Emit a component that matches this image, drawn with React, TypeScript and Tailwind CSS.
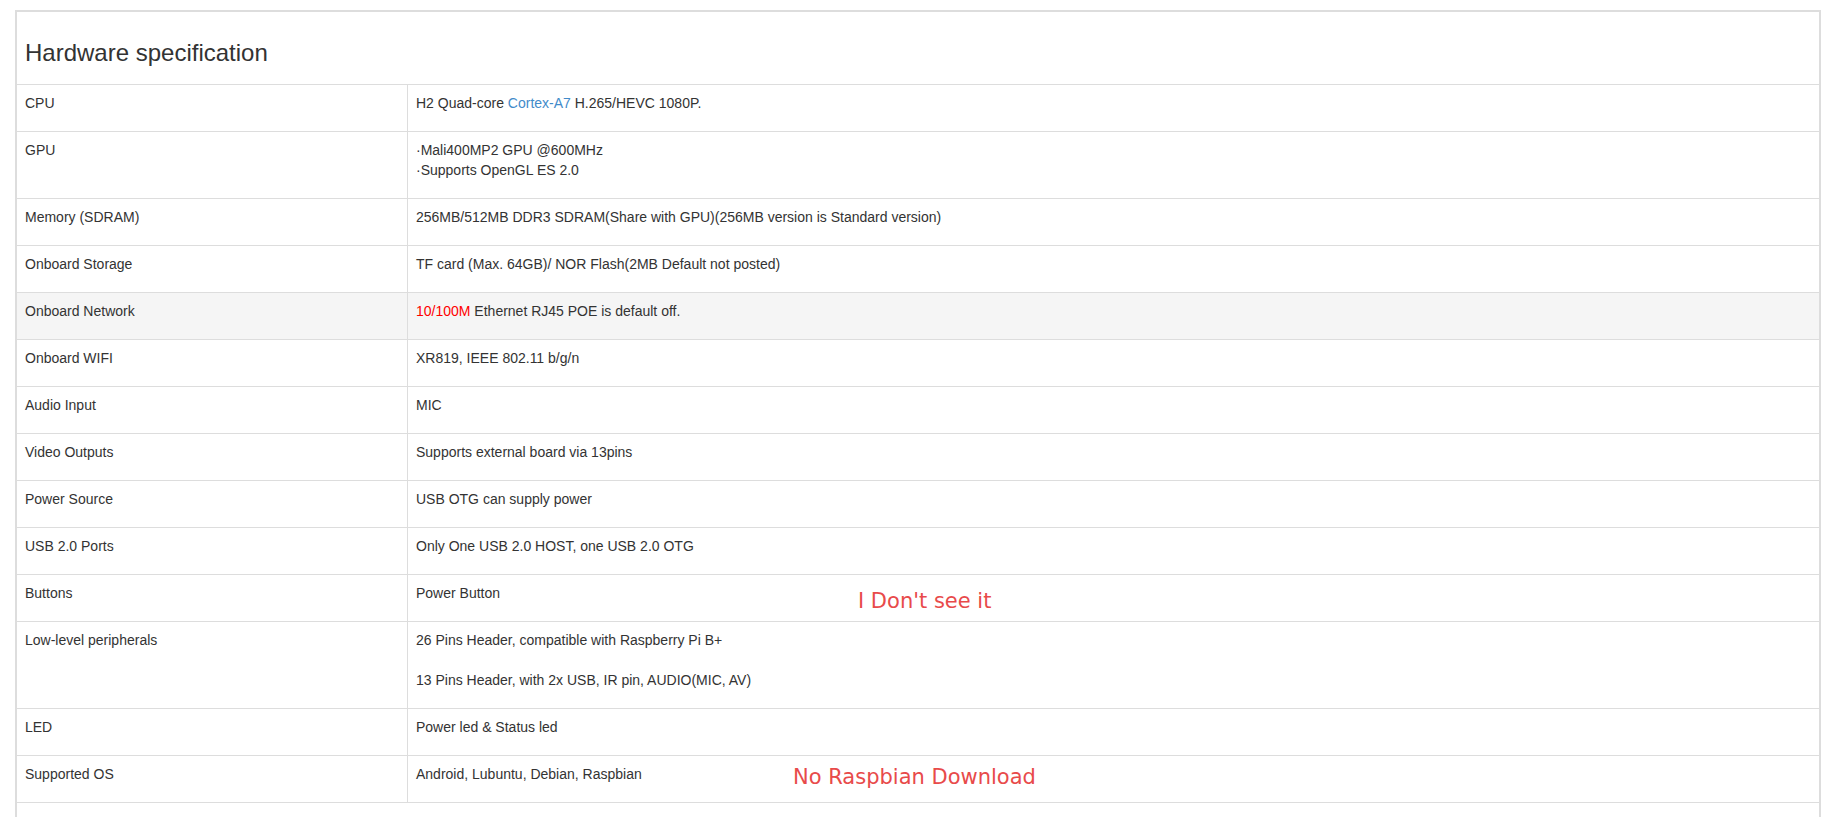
import React from 'react';

type Spec = {
  label: string;
  value: React.ReactNode;
  highlight?: boolean;
};

const specs: Spec[] = [
  {
    label: 'CPU',
    value: (
      <p className="mb-[10px]">
        H2 Quad-core <span className="text-[#428bca]">Cortex-A7</span> H.265/HEVC 1080P.
      </p>
    ),
  },
  {
    label: 'GPU',
    value: (
      <p className="mb-[10px]">
        ·Mali400MP2 GPU @600MHz
        <br />
        ·Supports OpenGL ES 2.0
      </p>
    ),
  },
  {
    label: 'Memory (SDRAM)',
    value: <p className="mb-[10px]">256MB/512MB DDR3 SDRAM(Share with GPU)(256MB version is Standard version)</p>,
  },
  {
    label: 'Onboard Storage',
    value: <p className="mb-[10px]">TF card (Max. 64GB)/ NOR Flash(2MB Default not posted)</p>,
  },
  {
    label: 'Onboard Network',
    highlight: true,
    value: (
      <p className="mb-[10px]">
        <span className="text-[#ff0000]">10/100M</span> Ethernet RJ45 POE is default off.
      </p>
    ),
  },
  { label: 'Onboard WIFI', value: <p className="mb-[10px]">XR819, IEEE 802.11 b/g/n</p> },
  { label: 'Audio Input', value: <p className="mb-[10px]">MIC</p> },
  { label: 'Video Outputs', value: <p className="mb-[10px]">Supports external board via 13pins</p> },
  { label: 'Power Source', value: <p className="mb-[10px]">USB OTG can supply power</p> },
  { label: 'USB 2.0 Ports', value: <p className="mb-[10px]">Only One USB 2.0 HOST, one USB 2.0 OTG</p> },
  { label: 'Buttons', value: <p className="mb-[10px]">Power Button</p> },
  {
    label: 'Low-level peripherals',
    value: (
      <>
        <p className="mb-[20px]">26 Pins Header, compatible with Raspberry Pi B+</p>
        <p className="mb-[10px]">13 Pins Header, with 2x USB, IR pin, AUDIO(MIC, AV)</p>
      </>
    ),
  },
  { label: 'LED', value: <p className="mb-[10px]">Power led &amp; Status led</p> },
  { label: 'Supported OS', value: <p className="mb-[10px]">Android, Lubuntu, Debian, Raspbian</p> },
];

const SpecRow: React.FC<{ spec: Spec }> = ({ spec }) => (
  <div
    className={`grid grid-cols-[391px_1fr] border-t border-[#ddd] ${
      spec.highlight ? 'bg-[#f5f5f5]' : ''
    }`}
  >
    <div className="border-r border-[#ddd] p-2">
      <p className="mb-[10px]">{spec.label}</p>
    </div>
    <div className="p-2">{spec.value}</div>
  </div>
);

export default function App() {
  return (
    <div
      className="relative min-h-screen bg-white pt-[10px] text-[14px] leading-[20px] text-[#333]"
      style={{ fontFamily: '"Liberation Sans", Arial, sans-serif' }}
    >
      <div className="ml-[15px] mr-[14px] border-2 border-[#ddd] pb-[20px]">
        <div className="h-[72px] px-2 pt-[28px]">
          <h3 className="text-[24px] font-normal leading-[26.4px] text-[#333]">Hardware specification</h3>
        </div>
        {specs.map((spec) => (
          <SpecRow key={spec.label} spec={spec} />
        ))}
        <div className="border-t border-[#ddd]" />
      </div>

      {/* annotations drawn over the screenshot */}
      <div
        className="absolute left-[858px] top-[591px] text-[21px] leading-[21px] text-[#e84a4a]"
        style={{ fontFamily: '"DejaVu Sans", sans-serif' }}
      >
        I Don't see it
      </div>
      <div
        className="absolute left-[793px] top-[767px] text-[21px] leading-[21px] text-[#e84a4a]"
        style={{ fontFamily: '"DejaVu Sans", sans-serif' }}
      >
        No Raspbian Download
      </div>
    </div>
  );
}
